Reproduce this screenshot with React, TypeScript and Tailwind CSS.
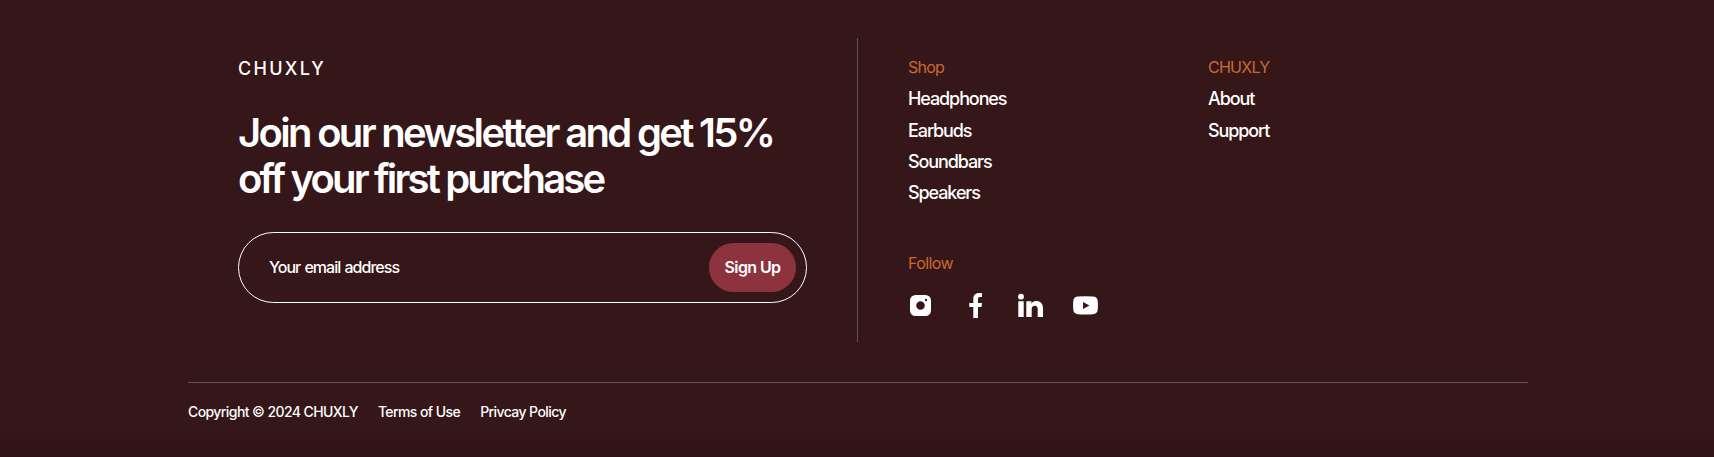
import type { ReactNode } from "react";

const shop = ["Headphones", "Earbuds", "Soundbars", "Speakers"];
const company = ["About", "Support"];

function LinkColumn({ title, links }: { title: string; links: string[] }) {
  return (
    <div className="w-[300px]">
      <h3 className="text-base leading-[31.4px] tracking-[-0.75px] text-[#cb6931]">{title}</h3>
      <ul className="text-lg leading-[31.4px] font-medium tracking-[-1.1px]">
        {links.map((link) => (
          <li key={link}>
            <a href="#">{link}</a>
          </li>
        ))}
      </ul>
    </div>
  );
}

function SocialIcon({ label, children }: { label: string; children: ReactNode }) {
  return (
    <a href="#" aria-label={label} className="block size-[25px]">
      <svg viewBox="0 0 25 25" className="size-full" fill="currentColor">
        {children}
      </svg>
    </a>
  );
}

export default function App() {
  return (
    <footer className="flex h-[457px] flex-col bg-linear-to-b from-[#351619] from-93% to-[#301315] pt-[38px] pl-[188px] font-['Inter',sans-serif] text-white antialiased">
      <div className="w-[1340px]">
        <div className="flex h-[304px]">
          <section className="w-[670px] border-r border-[#695053] pr-[49px] pl-[50px]">
            <div className="mt-[15px] text-lg leading-[31px] font-medium tracking-[2.3px]">CHUXLY</div>
            <h2 className="mt-[26px] text-[40px] leading-[46px] font-semibold whitespace-nowrap">
              <span className="block tracking-[-2.68px]">Join our newsletter and get 15%</span>
              <span className="block tracking-[-2.84px]">off your first purchase</span>
            </h2>
            <form className="mt-[30px] flex h-[71px] w-[569px] items-center justify-between rounded-full border border-white pr-[10px] pl-[30px]">
              <span className="pb-[2px] text-base font-medium tracking-[-0.97px] [word-spacing:0.8px]">
                Your email address
              </span>
              <button
                type="button"
                className="h-[49px] w-[87px] rounded-full bg-[#8c333d] pb-[2px] text-base font-semibold tracking-[-0.6px]"
              >
                Sign Up
              </button>
            </form>
          </section>
          <section className="pt-[13.8px] pl-[50px]">
            <nav className="flex">
              <LinkColumn title="Shop" links={shop} />
              <LinkColumn title="CHUXLY" links={company} />
            </nav>
            <h3 className="mt-[39.2px] text-base leading-[31px] tracking-[-0.6px] text-[#cb6931]">Follow</h3>
            <div className="mt-[14px] flex gap-[30px]">
              <SocialIcon label="Instagram">
                <path
                  fillRule="evenodd"
                  d="M7.500 2h10A5.500 5.500 0 0 1 23 7.500v10a5.500 5.500 0 0 1-5.500 5.500h-10A5.500 5.500 0 0 1 2 17.500v-10A5.500 5.500 0 0 1 7.500 2ZM12.500 8.200a4.300 4.300 0 1 0 0 8.600a4.300 4.300 0 1 0 0-8.600ZM18 5.800a1.200 1.200 0 1 0 0 2.400a1.200 1.200 0 1 0 0-2.400Z"
                />
              </SocialIcon>
              <SocialIcon label="Facebook">
                <path d="M10.300 25V14H6.300V10H10.300V6.200C10.300 2.200 12.500 0 16 0H19V4H17C15.600 4 15 4.700 15 6V10H19L18.500 14H15V25Z" />
              </SocialIcon>
              <SocialIcon label="LinkedIn">
                <circle cx="3" cy="3.700" r="2.900" />
                <path d="M.300 8.300H5.700V24H.300ZM8.300 8.300H13.400V10.400C14.200 8.900 15.900 7.900 18 7.900C22.500 7.900 25 10.500 25 15.200V24H19.700V16.300C19.700 13.900 18.700 12.700 16.900 12.700C14.800 12.700 13.700 13.900 13.700 16.300V24H8.300Z" />
              </SocialIcon>
              <SocialIcon label="YouTube">
                <path
                  fillRule="evenodd"
                  d="M5 3.400Q12.500 2.900 20 3.400Q24 3.700 24.600 7Q25.200 12.300 24.600 17.600Q24 20.900 20 21.200Q12.500 21.700 5 21.200Q1 20.900.400 17.600Q-.200 12.300.400 7Q1 3.700 5 3.400ZM10 8.900V15.900L16.500 12.400Z"
                />
              </SocialIcon>
            </div>
          </section>
        </div>
        <div className="mt-[40px] flex gap-[20px] border-t border-[#695053] pt-[18px] text-sm leading-[21px] font-medium tracking-[-0.58px]">
          <span>Copyright © 2024 CHUXLY</span>
          <a href="#">Terms of Use</a>
          <a href="#">Privcay Policy</a>
        </div>
      </div>
    </footer>
  );
}
